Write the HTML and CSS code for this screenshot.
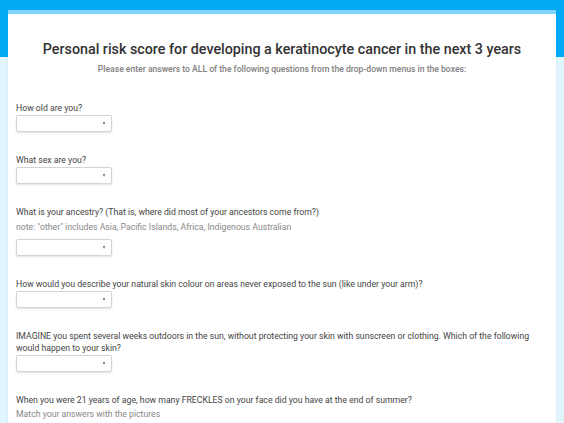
FILE: index.html
```html
<!DOCTYPE html>
<html>
<head>
<meta charset="utf-8">
<link rel="stylesheet" href="styles.css">
</head>
<body>
<div class="band"></div>
<main class="card">
  <h1 class="title">Personal risk score for developing a keratinocyte cancer in the next 3 years</h1>
  <p class="subtitle">Please enter answers to ALL of the following questions from the drop-down menus in the boxes:</p>

  <div class="q">
    <label class="label">How old are you?</label>
    <span class="sel"><select><option></option></select></span>
  </div>
  <div class="q">
    <label class="label">What sex are you?</label>
    <span class="sel"><select><option></option></select></span>
  </div>
  <div class="q">
    <label class="label">What is your ancestry? (That is, where did most of your ancestors come from?)</label>
    <p class="note">note: "other" includes Asia, Pacific Islands, Africa, Indigenous Australian</p>
    <span class="sel"><select><option></option></select></span>
  </div>
  <div class="q">
    <label class="label">How would you describe your natural skin colour on areas never exposed to the sun (like under your arm)?</label>
    <span class="sel"><select><option></option></select></span>
  </div>
  <div class="q">
    <label class="label">IMAGINE you spent several weeks outdoors in the sun, without protecting your skin with sunscreen or clothing. Which of the following would happen to your skin?</label>
    <span class="sel"><select><option></option></select></span>
  </div>
  <div class="q">
    <label class="label">When you were 21 years of age, how many FRECKLES on your face did you have at the end of summer?</label>
    <p class="note2">Match your answers with the pictures</p>
  </div>
</main>
</body>
</html>
```
FILE: styles.css
```css
html, body {
  margin: 0;
  padding: 0;
}
body {
  background: #e1f5fe;
  font-family: Roboto, "Liberation Sans", sans-serif;
  position: relative;
  height: 423px;
  overflow: hidden;
}
.band {
  position: absolute;
  left: 0;
  top: 0;
  right: 0;
  height: 57px;
  background: #03a9f4;
}
.card {
  position: relative;
  margin: 10px 8px 0 8px;
  background: #fff;
  border-top: 4px solid #81d4fa;
  padding: 26px 8px 40px 8px;
  min-height: 600px;
  box-shadow: 0 0 2px rgba(0,0,0,0.08);
}
.title {
  margin: 0;
  text-align: center;
  font-size: 14.3px;
  font-weight: 500;
  color: #333;
  line-height: 18px;
}
.subtitle {
  margin: 5px 0 0 0;
  text-align: center;
  font-size: 8.6px;
  font-weight: 500;
  color: #808080;
  line-height: 12px;
}
.q {
  display: flex;
  flex-direction: column;
  align-items: flex-start;
}
.q:first-of-type { margin-top: 27px; }
.label {
  font-size: 8.7px;
  color: #444;
  line-height: 12px;
  margin-bottom: 1px;
}
.note {
  margin: 2px 0 6px 0;
  font-size: 8.7px;
  color: #888;
  line-height: 12px;
}
.note2 {
  margin: 1px 0 0 0;
  font-size: 8.7px;
  color: #888;
  line-height: 12px;
}
.sel {
  position: relative;
  display: block;
  width: 96px;
  height: 17px;
  margin-bottom: 22px;
}
.sel select {
  appearance: none;
  -webkit-appearance: none;
  width: 96px;
  height: 17px;
  border: 1px solid #d4d4d4;
  border-radius: 2px;
  background: #fff;
  box-shadow: 0 1px 2px rgba(0,0,0,0.12);
  margin: 0;
  padding: 0;
  display: block;
}
.sel::after {
  content: "";
  position: absolute;
  right: 7px;
  top: 7px;
  border-left: 1.5px solid transparent;
  border-right: 1.5px solid transparent;
  border-top: 3px solid #555;
}
```
